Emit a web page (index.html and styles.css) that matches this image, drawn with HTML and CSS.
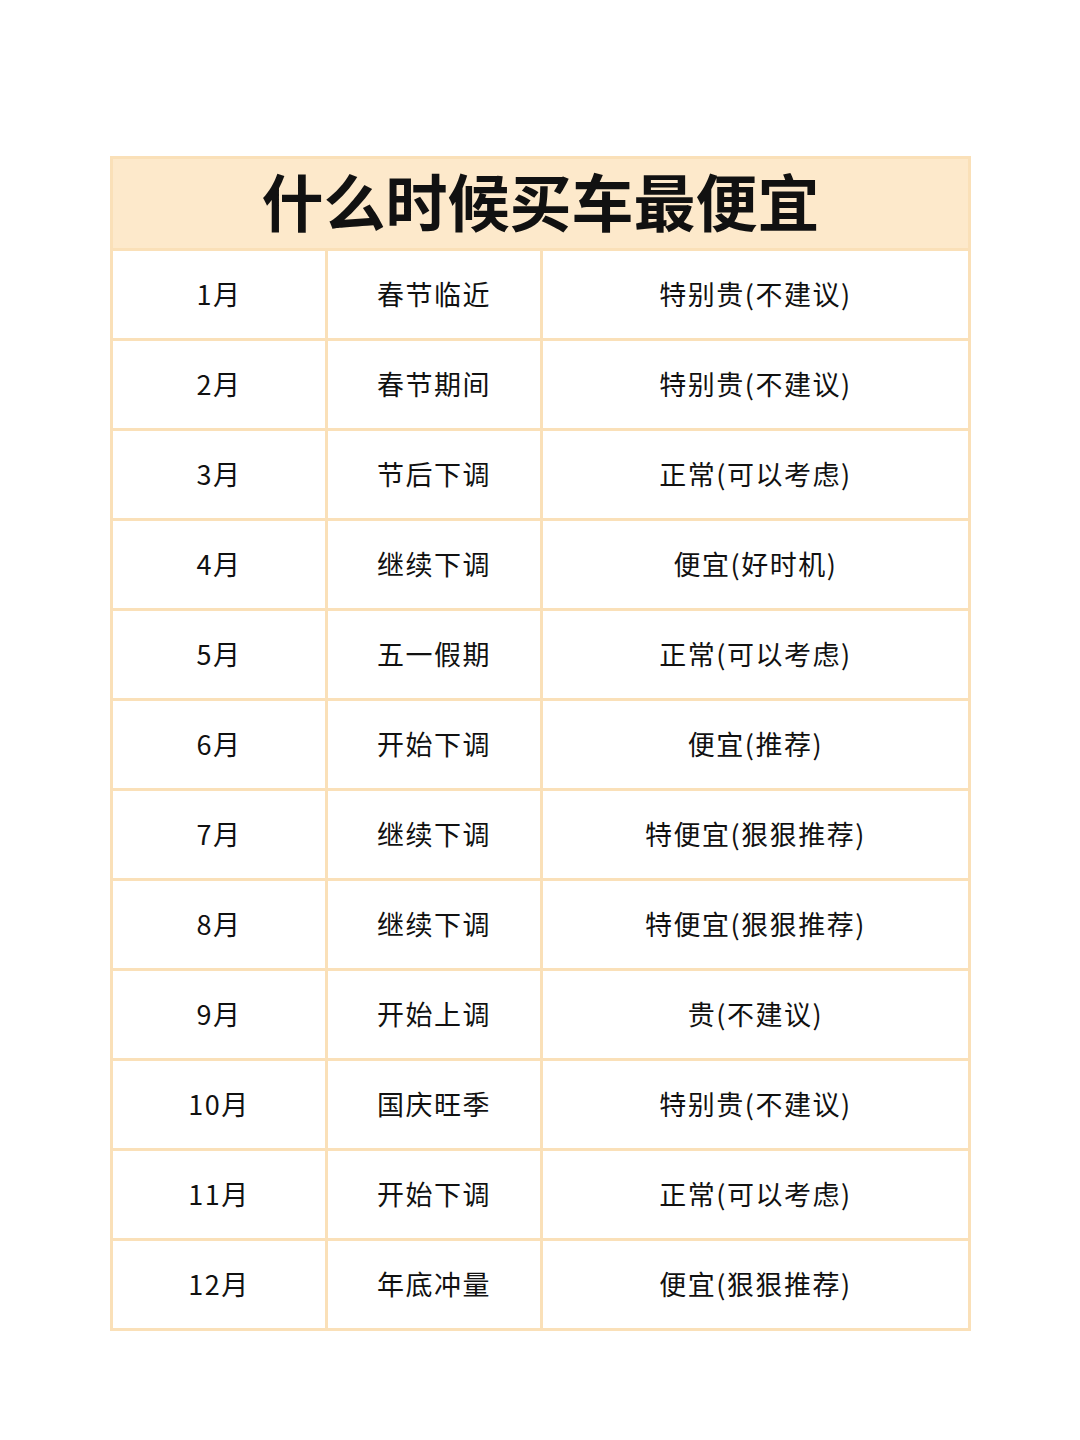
FILE: index.html
```html
<!DOCTYPE html>
<html lang="zh">
<head>
<meta charset="utf-8">
<title>什么时候买车最便宜</title>
<link rel="stylesheet" href="styles.css">
</head>
<body>
<div class="table">
  <div class="title">什么时候买车最便宜</div>
  <div class="cell">1月</div><div class="cell">春节临近</div><div class="cell">特别贵(不建议)</div>
  <div class="cell">2月</div><div class="cell">春节期间</div><div class="cell">特别贵(不建议)</div>
  <div class="cell">3月</div><div class="cell">节后下调</div><div class="cell">正常(可以考虑)</div>
  <div class="cell">4月</div><div class="cell">继续下调</div><div class="cell">便宜(好时机)</div>
  <div class="cell">5月</div><div class="cell">五一假期</div><div class="cell">正常(可以考虑)</div>
  <div class="cell">6月</div><div class="cell">开始下调</div><div class="cell">便宜(推荐)</div>
  <div class="cell">7月</div><div class="cell">继续下调</div><div class="cell">特便宜(狠狠推荐)</div>
  <div class="cell">8月</div><div class="cell">继续下调</div><div class="cell">特便宜(狠狠推荐)</div>
  <div class="cell">9月</div><div class="cell">开始上调</div><div class="cell">贵(不建议)</div>
  <div class="cell">10月</div><div class="cell">国庆旺季</div><div class="cell">特别贵(不建议)</div>
  <div class="cell">11月</div><div class="cell">开始下调</div><div class="cell">正常(可以考虑)</div>
  <div class="cell">12月</div><div class="cell">年底冲量</div><div class="cell">便宜(狠狠推荐)</div>
</div>
</body>
</html>
```

FILE: styles.css
```css
html, body {
  margin: 0;
  padding: 0;
  background: #ffffff;
}
body {
  width: 1080px;
  height: 1440px;
  font-family: "Noto Sans CJK SC", "Noto Sans", sans-serif;
}
.table {
  margin: 156px 0 0 110px;
  width: 861px;
  box-sizing: border-box;
  display: grid;
  grid-template-columns: 212px 212px 425px;
  grid-template-rows: 89px repeat(12, 87px);
  gap: 3px;
  padding: 3px;
  background: #fae0b8;
}
.title {
  grid-column: 1 / 4;
  background: #fde9cb;
  display: flex;
  align-items: center;
  justify-content: center;
  font-size: 62px;
  font-weight: 700;
  letter-spacing: 0;
  color: #111111;
  padding: 0 0 8px 0;
}
.cell {
  background: #ffffff;
  display: flex;
  align-items: center;
  justify-content: center;
  font-size: 27px;
  font-weight: 400;
  letter-spacing: 1.5px;
  color: #111111;
  padding-bottom: 3px;
}
```
